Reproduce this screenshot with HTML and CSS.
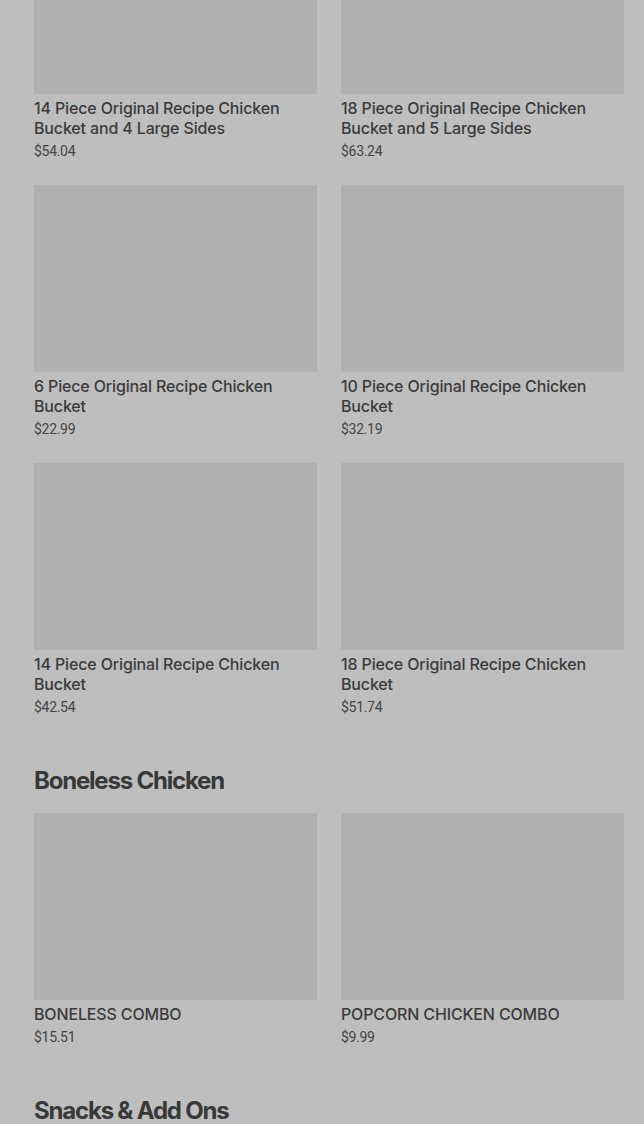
FILE: index.html
```html
<!DOCTYPE html>
<html>
<head>
<meta charset="utf-8">
<link rel="stylesheet" href="styles.css">
</head>
<body>
<main class="menu">
  <section class="section first">
    <div class="grid">
      <div class="card"><div class="img"></div><div class="title">14 Piece Original Recipe Chicken Bucket and 4 Large Sides</div><div class="price">$54.04</div></div>
      <div class="card"><div class="img"></div><div class="title">18 Piece Original Recipe Chicken Bucket and 5 Large Sides</div><div class="price">$63.24</div></div>
      <div class="card"><div class="img"></div><div class="title">6 Piece Original Recipe Chicken Bucket</div><div class="price">$22.99</div></div>
      <div class="card"><div class="img"></div><div class="title">10 Piece Original Recipe Chicken Bucket</div><div class="price">$32.19</div></div>
      <div class="card"><div class="img"></div><div class="title">14 Piece Original Recipe Chicken Bucket</div><div class="price">$42.54</div></div>
      <div class="card"><div class="img"></div><div class="title">18 Piece Original Recipe Chicken Bucket</div><div class="price">$51.74</div></div>
    </div>
  </section>
  <section class="section">
    <h2 class="heading">Boneless Chicken</h2>
    <div class="grid">
      <div class="card"><div class="img"></div><div class="title">BONELESS COMBO</div><div class="price">$15.51</div></div>
      <div class="card"><div class="img"></div><div class="title">POPCORN CHICKEN COMBO</div><div class="price">$9.99</div></div>
    </div>
  </section>
  <section class="section">
    <h2 class="heading">Snacks &amp; Add Ons</h2>
  </section>
</main>
</body>
</html>
```

FILE: styles.css
```css
html, body {
  margin: 0;
  padding: 0;
  background: #bebebe;
  overflow: hidden;
}
body {
  font-family: Inter, "Liberation Sans", sans-serif;
  color: #3b3b3b;
}
.menu {
  padding: 0 20px 0 34px;
}
.section.first {
  margin-top: -93px;
}
.section + .section {
  margin-top: 49px;
}
.heading {
  margin: 0 0 16px;
  font-family: Inter, "Liberation Sans", sans-serif;
  font-size: 24px;
  line-height: 32px;
  font-weight: 700;
  letter-spacing: -1.2px;
  color: #383838;
}
.grid {
  display: grid;
  grid-template-columns: 1fr 1fr;
  column-gap: 24px;
  row-gap: 25px;
}
.img {
  height: 187px;
  background: #b0b0b0;
}
.title {
  margin-top: 4px;
  font-size: 16px;
  line-height: 20px;
  font-weight: 500;
  letter-spacing: -0.15px;
}
.price {
  margin-top: 5px;
  font-family: Roboto, "Liberation Sans", sans-serif;
  font-size: 14px;
  line-height: 17px;
  letter-spacing: -0.3px;
  color: #444;
}
```
